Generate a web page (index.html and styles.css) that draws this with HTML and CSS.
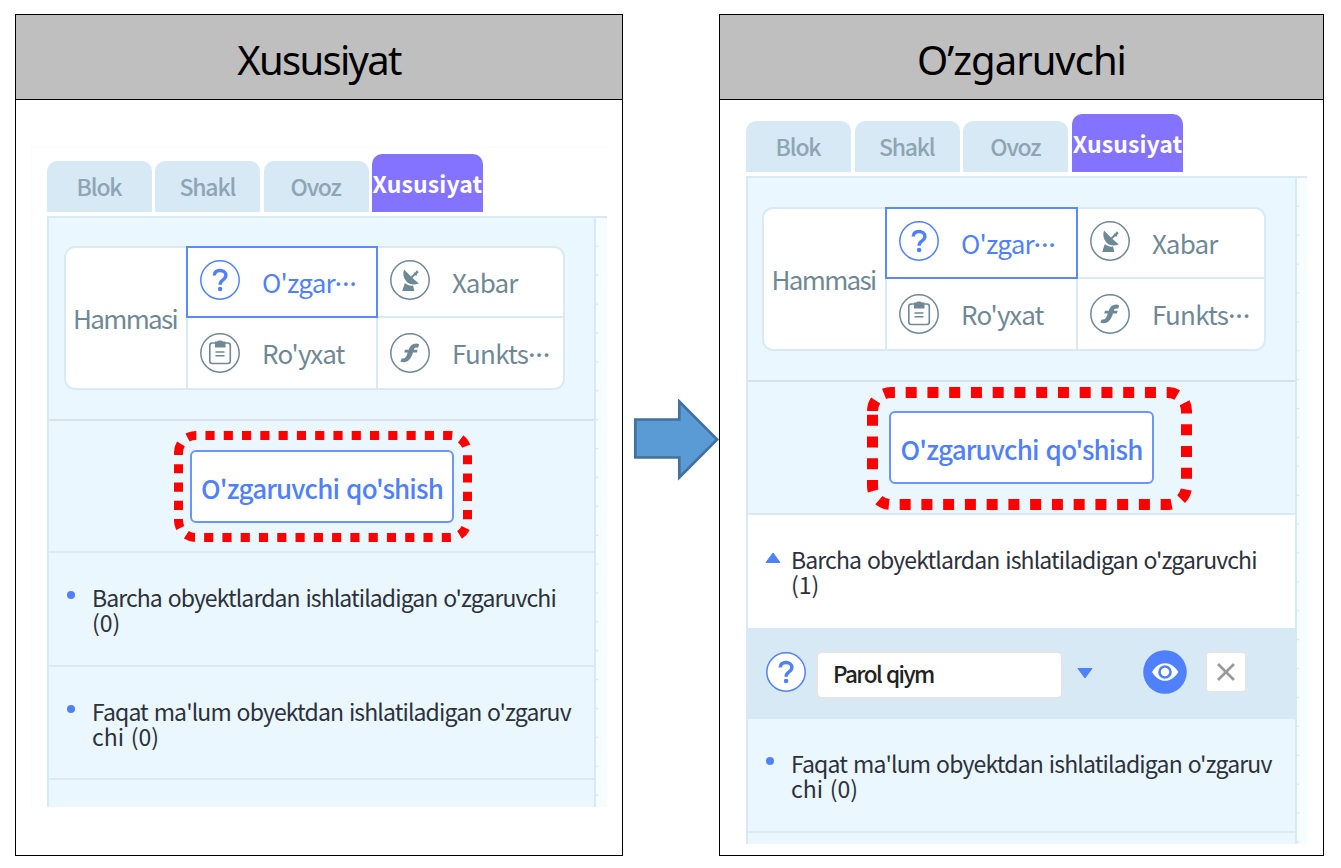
FILE: index.html
```html
<!DOCTYPE html>
<html lang="uz">
<head>
<meta charset="utf-8">
<title>Xususiyat</title>
<link rel="stylesheet" href="styles.css">
</head>
<body>
<svg class="defs" aria-hidden="true">
  <symbol id="i-question" viewBox="0 0 40 40"><circle cx="20" cy="20" r="19.2" fill="#fff" stroke="currentColor" stroke-width="1.5"/><path d="M14.200 15.500c.2-3.400 2.500-5 5.800-5s5.900 1.700 5.900 4.900c0 2.300-1.500 3.400-3.200 4.700-1.900 1.300-2.600 2.200-2.600 4.600" fill="none" stroke="currentColor" stroke-width="3.400"/><circle cx="20.100" cy="29" r="2.300" fill="currentColor"/></symbol>
  <symbol id="i-list" viewBox="0 0 40 40"><circle cx="20" cy="20" r="19.2" fill="none" stroke="currentColor" stroke-width="1.5"/><rect x="9.800" y="10" width="20.500" height="20.500" rx="2.500" fill="none" stroke="currentColor" stroke-width="1.600"/><path d="M15 8.500h2.300c.3-1.400 5.200-1.400 5.500 0H25.500v6H15z" fill="currentColor"/><path d="M15.500 19h9M15.500 22.800h9" stroke="currentColor" stroke-width="1.400"/></symbol>
  <symbol id="i-signal" viewBox="0 0 40 40"><circle cx="20" cy="20" r="19.2" fill="none" stroke="currentColor" stroke-width="1.5"/><path d="M14 9.500 21 16.500l3.300-3.300 1.200 1.200-3 3.600 6.300 5.500c-4.500 1.800-9.500 1.300-12.600-2.300-3-3.400-3.500-7.600-2.200-11.700z" fill="currentColor"/><path d="M26.800 10.200l2 2-1.900 1.800 .1 1.500h-3.100v-3h1.300z" fill="currentColor"/><path d="M14.800 23c2.700 2.200 5.200 3 8.300 2.600l1.200 5.400H12.200z" fill="currentColor"/></symbol>
  <symbol id="i-func" viewBox="0 0 40 40"><circle cx="20" cy="20" r="19.2" fill="none" stroke="currentColor" stroke-width="1.5"/><path d="M29.200 11.500l-1.200 3.300c-2.700-.8-3.600.2-4.200 2h3.900l-.8 2.700h-3.900c-1.900 6-4.600 9.700-9.400 9.700-1.400 0-2.400-.3-3.200-.7l1.300-3.100c3.200.6 4.700-1.300 6-5.900h-3.500l.8-2.700h3.700c1.300-4.200 3.900-6.300 7.400-6.300 1.300 0 2.300.4 3.100 1z" fill="currentColor"/></symbol>
</svg>

<main class="page">
  <section class="card card-a">
    <h1 class="card-title">Xususiyat</h1>
    <div class="card-body">
      <div class="screen">
        <nav class="tabs">
          <span class="tab">Blok</span><span class="tab">Shakl</span><span class="tab">Ovoz</span><span class="tab tab-on">Xususiyat</span>
        </nav>
        <div class="panel">
          <div class="content">
            <div class="filters">
              <div class="filter-grid">
                <div class="cell cell-all">Hammasi</div>
                <div class="cell cell-on"><svg class="ico"><use href="#i-question"/></svg><span>O'zgar<span class="more">···</span></span></div>
                <div class="cell"><svg class="ico"><use href="#i-signal"/></svg><span>Xabar</span></div>
                <div class="cell"><svg class="ico"><use href="#i-list"/></svg><span>Ro'yxat</span></div>
                <div class="cell"><svg class="ico"><use href="#i-func"/></svg><span>Funkts<span class="more">···</span></span></div>
              </div>
            </div>
            <div class="add">
              <button class="add-btn">O'zgaruvchi qo'shish</button>
              <svg class="mark" viewBox="0 0 298 111"><path d="M4.500 21.600A17.100 17.100 0 0 1 21.600 4.500H276.400A17.100 17.100 0 0 1 293.500 21.600V89.400A17.100 17.100 0 0 1 276.400 106.500H21.600A17.100 17.100 0 0 1 4.500 89.400Z"/></svg>
            </div>
            <div class="row"><i class="dot"></i><p><span class="t-all">Barcha obyektlardan ishlatiladigan o'zgaruvchi</span><br>(0)</p></div>
            <div class="row"><i class="dot"></i><p><span class="t-own">Faqat ma'lum obyektdan ishlatiladigan o'zgaruv</span><br>chi (0)</p></div>
          </div>
          <div class="strip"></div>
        </div>
      </div>
    </div>
  </section>

  <svg class="arrow" viewBox="0 0 96 82"><path d="M12.300 20.500H56.300V2.500L94.200 40.500 56.300 78.500V58.500H12.300z" fill="#5b9bd5" stroke="#41719c" stroke-width="2.700"/></svg>

  <section class="card card-b">
    <h1 class="card-title">O’zgaruvchi</h1>
    <div class="card-body">
      <div class="screen">
        <nav class="tabs">
          <span class="tab">Blok</span><span class="tab">Shakl</span><span class="tab">Ovoz</span><span class="tab tab-on">Xususiyat</span>
        </nav>
        <div class="panel">
          <div class="content">
            <div class="filters">
              <div class="filter-grid">
                <div class="cell cell-all">Hammasi</div>
                <div class="cell cell-on"><svg class="ico"><use href="#i-question"/></svg><span>O'zgar<span class="more">···</span></span></div>
                <div class="cell"><svg class="ico"><use href="#i-signal"/></svg><span>Xabar</span></div>
                <div class="cell"><svg class="ico"><use href="#i-list"/></svg><span>Ro'yxat</span></div>
                <div class="cell"><svg class="ico"><use href="#i-func"/></svg><span>Funkts<span class="more">···</span></span></div>
              </div>
            </div>
            <div class="add">
              <button class="add-btn">O'zgaruvchi qo'shish</button>
              <svg class="mark" viewBox="0 0 325 123"><path d="M5.500 23.900A18.400 18.400 0 0 1 23.900 5.500H301.100A18.400 18.400 0 0 1 319.500 23.900V99.100A18.400 18.400 0 0 1 301.100 117.500H23.900A18.400 18.400 0 0 1 5.500 99.100Z"/></svg>
            </div>
            <div class="row row-open"><svg class="tri" viewBox="0 0 16 12"><path d="M8 1 15 10.500H1z" fill="#4f80ff" stroke="#4f80ff" stroke-linejoin="round"/></svg><p><span class="t-all">Barcha obyektlardan ishlatiladigan o'zgaruvchi</span><br>(1)</p></div>
            <div class="var">
              <svg class="ico ico-var"><use href="#i-question"/></svg>
              <span class="field">Parol qiym</span>
              <svg class="caret" viewBox="0 0 16 12"><path d="M8 11 15 1.500H1z" fill="#4f80ff" stroke="#4f80ff" stroke-linejoin="round"/></svg>
              <svg class="eye" viewBox="0 0 44 44"><circle cx="22" cy="22" r="21.800" fill="#4f80ff"/><path d="M9 22C15.500 10.300 28.500 10.300 35.300 22 28.500 33.700 15.500 33.700 9 22z" fill="#fff"/><circle cx="22" cy="22" r="5.500" fill="#fff" stroke="#4f80ff" stroke-width="2.600"/></svg>
              <span class="del"><svg viewBox="0 0 20 20"><path d="M2 2l16 16M18 2L2 18" stroke="#999" stroke-width="2.600"/></svg></span>
            </div>
            <div class="row"><i class="dot"></i><p><span class="t-own">Faqat ma'lum obyektdan ishlatiladigan o'zgaruv</span><br>chi (0)</p></div>
          </div>
          <div class="strip"></div>
        </div>
      </div>
    </div>
  </section>
</main>
</body>
</html>
```
FILE: styles.css
```css
* { box-sizing: border-box; }
body {
  margin: 0;
  background: #fff;
  font-family: "Noto Sans CJK KR", "Noto Sans", sans-serif;
}
.defs { position: absolute; width: 0; height: 0; }
.page {
  display: flex;
  width: 1341px;
  height: 868px;
  padding: 14px 0 0 15px;
  overflow: hidden;
}
.card {
  height: 842px;
  border: 1px solid #000;
  flex: none;
}
.card-a { width: 608px; }
.card-b { width: 605px; }
.card-title {
  margin: 0;
  height: 85px;
  border-bottom: 1px solid #000;
  background: #bfbfbf;
  font: 400 40px/90px "Noto Sans", sans-serif;
  letter-spacing: -1px;
  text-align: center;
  color: #000;
}
.card-a .card-title { letter-spacing: -1.700px; }
.arrow {
  width: 96px;
  height: 82px;
  margin-top: 385px;
  flex: none;
}
.card-a .card-body { padding: 47px 15px 0; }
.card-a .screen {
  padding: 6px 0 0 15px;
  border: solid #fbfbfb;
  border-width: 1px 0 0 1px;
}
.card-b .card-body { padding: 14px 16px 0 26px; }

.tabs {
  display: flex;
  align-items: flex-end;
  gap: 3.300px;
  height: 58px;
}
.card-b .tabs { gap: 3.700px; }
.tab {
  width: 105px;
  height: 51px;
  padding-right: 1px;
  border-radius: 10px 10px 0 0;
  background: #d7e9f4;
  color: #8da5b4;
  font-size: 23px;
  font-weight: 500;
  line-height: 50px;
  letter-spacing: -1.200px;
  text-align: center;
}
.tab-on {
  width: 111px;
  height: 58px;
  padding: 0;
  background: #8373ff;
  color: #fff;
  font-weight: 700;
  line-height: 58px;
  letter-spacing: .1px;
  white-space: nowrap;
}
.panel {
  display: flex;
  margin-top: 4px;
  border-top: 2px solid #d7e9f4;
}
.card-a .panel { height: 591px; }
.card-b .panel { height: 668px; }
.content {
  width: 549px;
  border: solid #d7e9f4;
  border-width: 0 2px;
  background: #eaf7ff;
}
.card-b .content { width: 551px; }
.strip {
  flex: 1;
  background: radial-gradient(circle at 1px 29px, #d3e6f2 1.200px, transparent 1.800px) 0 0 / 11px 28.900px #f6fcff;
}

.filters {
  height: 203px;
  padding: 28px 0 0 15px;
  border-bottom: 2px solid #d8e0ee;
}
.card-b .filters { height: 204px; padding-top: 29px; }
.filter-grid {
  display: grid;
  grid-template-columns: 120px 190px minmax(0, 1fr);
  grid-template-rows: 70px 70px;
  width: 501px;
  height: 144px;
  border: 2px solid #d9eaf5;
  border-radius: 11px;
  background: #fff;
}
.card-b .filter-grid { width: 504px; margin-left: -1px; grid-template-columns: 121px 191px minmax(0, 1fr); }
.cell {
  display: flex;
  align-items: center;
  padding: 0 0 1px 12px;
  border-left: 2px solid #d9eaf5;
  border-bottom: 2px solid #d9eaf5;
  color: #6f8896;
  font-size: 26px;
  line-height: 30px;
  letter-spacing: -.8px;
  white-space: nowrap;
}
.cell:nth-child(n+4) { border-bottom: 0; }
.cell:nth-child(n+4) .ico { margin-top: 0; }
.cell-all {
  grid-row: span 2;
  justify-content: center;
  padding: 0 2px 0 0;
  border: 0;
  letter-spacing: -1.700px;
}
.cell-on {
  z-index: 1;
  margin: -2px -2px 0 0;
  border: 2px solid #5a88ff;
  color: #4f80ff;
}
.more {
  font-family: "Noto Sans", sans-serif;
  font-weight: 500;
  letter-spacing: .3px;
  line-height: 1;
}
.ico { width: 40px; height: 40px; flex: none; margin: -3px 22px 0 0; }

.add {
  position: relative;
  height: 132px;
  padding: 29px 0 0 141px;
  border-bottom: 2px solid #d9eaf5;
}
.card-b .add { height: 133px; }
.add-btn {
  display: block;
  width: 264px;
  height: 73px;
  padding: 2px 0 0;
  border: 2px solid #6c94ff;
  border-radius: 6px;
  background: #fff;
  color: #4f80ff;
  font: 500 26px/30px "Noto Sans CJK KR", sans-serif;
  letter-spacing: -.840px;
  word-spacing: 2px;
  white-space: nowrap;
}
.card-b .add-btn { width: 265px; }
.mark { position: absolute; fill: none; stroke: #f00; }
.card-a .mark { left: 125px; top: 10px; width: 298px; height: 111px; stroke-width: 9; stroke-dasharray: 9.140 9.140; }
.card-b .mark { left: 119px; top: 5px; width: 325px; height: 123px; stroke-width: 11; stroke-dasharray: 11 10.750; }

.row {
  display: flex;
  height: 113.500px;
  padding: 32px 0 0 17.500px;
  border-bottom: 2px solid #d9eaf5;
  color: #2c313d;
  font-size: 23px;
  line-height: 25px;
  word-spacing: 1.500px;
  white-space: nowrap;
}
.row p { margin: 0; }
.row-open { height: 113px; background: #fff; border-bottom: 0; }
.dot {
  width: 8px;
  height: 8px;
  margin: 6px 17.500px 0 0;
  border-radius: 50%;
  background: #4f80ff;
}
.tri { width: 16px; height: 12px; margin: 5px 10px 0 -.5px; }
.t-all { letter-spacing: -.910px; }
.t-own { letter-spacing: -.880px; }
.card-b .t-all { letter-spacing: -.870px; }
.card-b .t-own { letter-spacing: -.840px; }

.var {
  display: flex;
  align-items: flex-start;
  height: 91px;
  padding: 23px 0 0 18px;
  background: #d7e9f4;
}
.ico-var { margin: 1px 10px 0 0; color: #4f80ff; }
.field {
  width: 247px;
  height: 48px;
  padding-left: 15px;
  border: 2px solid #e3e4e8;
  border-radius: 6px;
  background: #fff;
  color: #222;
  font-size: 22.500px;
  font-weight: 500;
  line-height: 41px;
  letter-spacing: -1.600px;
  word-spacing: 1.500px;
}
.caret { width: 16px; height: 12px; margin: 16px 0 0 14px; }
.eye { width: 44px; height: 44px; margin: -1px 0 0 50px; }
.del {
  display: grid;
  place-items: center;
  width: 42px;
  height: 42px;
  margin-left: 18px;
  border: 2px solid #e3e4e8;
  border-radius: 5px;
  background: #fff;
}
.del svg { width: 20px; height: 20px; }
```
